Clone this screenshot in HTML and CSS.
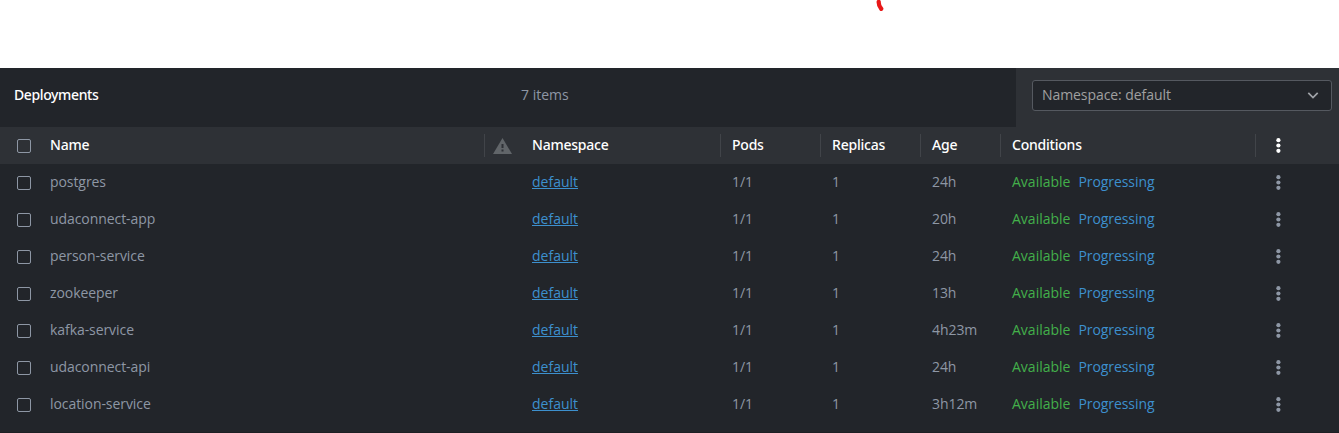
FILE: index.html
```
<!DOCTYPE html>
<html lang="en">
<head>
<meta charset="utf-8">
<title>Deployments</title>
<link rel="stylesheet" href="styles.css">
</head>
<body>
<div class="top"><svg class="mark" width="12" height="14" viewBox="0 0 12 14"><path d="M3.7 1.9C3.6 4.8 4.6 7 6.2 8.8" fill="none" stroke="#e81818" stroke-width="4.3" stroke-linecap="round"/></svg></div>
<main class="panel">
<header class="bar">
<h1 class="title">Deployments</h1>
<span class="count">7 items</span>
<div class="filter"><div class="select"><span>Namespace: default</span><svg width="12" height="8" viewBox="0 0 12 8"><path d="M1.3 1.8L6 6.5L10.7 1.8" fill="none" stroke="#a0a3a8" stroke-width="1.7"/></svg></div></div>
</header>
<div class="table" id="table">
<div class="row head">
<span class="check"><i class="box"></i></span><span class="name">Name</span>
<span class="warn"><svg width="19" height="16" viewBox="0 0 19 16"><path d="M9.5 0L19 16H0Z" fill="#616569"/><path d="M8.5 6h2v4h-2zM8.5 11.5h2v2h-2z" fill="#2e3136"/></svg></span>
<span class="ns">Namespace</span><span class="pods">Pods</span><span class="replicas">Replicas</span><span class="age">Age</span><span class="cond">Conditions</span>
<span class="menu"><svg width="6" height="16" viewBox="0 0 6 16"><g fill="currentColor"><circle cx="3.4" cy="2.2" r="2.1"/><circle cx="3.4" cy="7.5" r="2.1"/><circle cx="3.4" cy="12.8" r="2.1"/></g></svg></span>
</div>
</div>
</main>
<script src="app.js"></script>
</body>
</html>
```
FILE: styles.css
```
body {
  margin: 0;
  height: 433px;
  overflow: hidden;
  background: #fff;
  font: 14px/20px "Open Sans", "Noto Sans", sans-serif;
  letter-spacing: -0.07px;
  color: #8e97a5;
}
.top { height: 68px; }
.mark { display: block; margin-left: 875px; }
.panel { height: 365px; background: #22252a; box-sizing: border-box; border-bottom: 1px solid #1d1f23; }
.bar { display: flex; align-items: center; height: 59px; }
.title, .head { font-family: "Noto Sans", "Open Sans", sans-serif; font-weight: 500; letter-spacing: -0.22px; color: #fff; }
.title { flex: none; margin: 0; padding: 0 0 5px 14px; width: 521px; box-sizing: border-box; font-size: 14px; letter-spacing: -0.38px; }
.count { flex: none; width: 495px; padding-bottom: 5px; letter-spacing: 0; }
.filter { flex: 1; height: 59px; padding: 12px 7px 0 16px; box-sizing: border-box; background: #2e3136; }
.select {
  display: flex; align-items: center; justify-content: space-between;
  height: 31px; box-sizing: border-box; padding: 0 12px 1px 9px;
  border: 1px solid #555960; border-radius: 3px; background: #22252a; color: #a0a0a0;
}
.row { display: flex; align-items: center; height: 37px; }
.row > span { box-sizing: border-box; height: 23px; line-height: 21px; white-space: nowrap; }
.head { background: #2e3136; }
.check { width: 50px; padding: 5px 0 0 17px; }
.box { display: block; width: 14px; height: 14px; box-sizing: border-box; border: 1px solid #8e97a5; border-radius: 2px; }
.name { width: 434px; }
.warn { width: 36px; padding: 4px 0 0 9px; }
.head .warn { padding-left: 8px; }
.warn svg { display: block; }
.ns { width: 200px; padding-left: 12px; }
.pods, .replicas { width: 100px; padding-left: 12px; }
.age { width: 80px; padding-left: 12px; }
.cond { display: flex; gap: 8px; width: 255px; padding-left: 12px; }
.menu { flex: 1; padding: 4px 0 0 20px; }
.menu svg { display: block; }
.head .warn, .head .pods, .head .replicas, .head .age, .head .cond, .head .menu { border-left: 1px solid #414449; }
.head .pods, .head .replicas, .head .age, .head .cond { padding-left: 11px; }
.head .menu { padding-left: 19px; }
.link { color: #3d90ce; text-decoration: underline; letter-spacing: 0; }
.ok, .progress { font-weight: 400; }
.ok { color: #43b04a; letter-spacing: 0; }
.progress { color: #3d90ce; }
```
FILE: app.js
```
const rows = [
  ["postgres", "24h"], ["udaconnect-app", "20h"], ["person-service", "24h"],
  ["zookeeper", "13h"], ["kafka-service", "4h23m"], ["udaconnect-api", "24h"],
  ["location-service", "3h12m"],
];
const table = document.getElementById("table");
const dots = table.querySelector(".menu").innerHTML;
for (const [name, age] of rows) {
  table.insertAdjacentHTML("beforeend", `<div class="row">
    <span class="check"><i class="box"></i></span><span class="name">${name}</span><span class="warn"></span>
    <span class="ns"><a class="link">default</a></span><span class="pods">1/1</span><span class="replicas">1</span>
    <span class="age">${age}</span>
    <span class="cond"><b class="ok">Available</b><b class="progress">Progressing</b></span>
    <span class="menu">${dots}</span></div>`);
}
```
